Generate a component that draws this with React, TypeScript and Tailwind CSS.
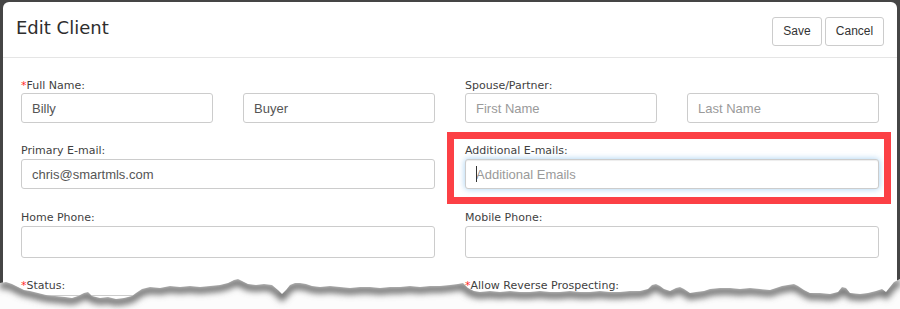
import React from 'react';

const labelCls =
  "block h-[14px] text-[11px] leading-[14px] text-[#3f3f3f] font-['DejaVu_Sans',Verdana,sans-serif] whitespace-nowrap";
const inputCls =
  "block w-full rounded-[3px] border border-[#cccccc] bg-white px-[10px] text-[13px] text-[#555] placeholder:text-[#9a9a9a] font-['Liberation_Sans',Arial,sans-serif] outline-none";

// puntos del borde rasgado (x, y global)
const tear: [number, number][] = [
  [0, 283], [6, 282], [12, 284], [18, 287], [24, 290], [30, 291], [38, 293], [46, 295], [55, 296],
  [65, 297], [72, 298], [78, 296], [84, 293], [88, 292], [92, 296], [100, 298], [108, 297], [116, 299],
  [124, 298], [132, 296], [136, 293], [142, 289], [150, 287], [160, 288], [170, 286], [180, 287],
  [190, 286], [200, 287], [210, 286], [220, 285], [228, 283], [234, 280], [238, 279], [242, 281],
  [248, 284], [256, 285], [264, 284], [272, 285], [278, 290], [282, 294], [286, 290], [290, 285],
  [295, 283], [300, 283], [306, 284], [312, 286], [320, 287], [330, 286], [340, 287], [350, 288],
  [360, 287], [370, 287], [380, 288], [390, 287], [400, 287], [410, 286], [420, 287], [430, 286],
  [440, 286], [450, 285], [458, 284], [463, 283], [468, 288], [474, 291], [480, 292], [490, 291],
  [500, 292], [510, 291], [520, 292], [530, 292], [540, 291], [550, 292], [560, 292], [570, 291],
  [580, 292], [590, 292], [600, 291], [610, 292], [620, 292], [630, 291], [640, 291], [648, 289],
  [652, 285], [656, 284], [660, 286], [664, 289], [670, 291], [676, 288], [680, 287], [684, 289],
  [690, 293], [696, 292], [704, 291], [710, 289], [720, 288], [730, 288], [740, 289], [750, 288],
  [760, 289], [770, 290], [776, 288], [782, 286], [788, 285], [794, 284], [798, 286], [804, 290],
  [810, 293], [820, 293], [830, 294], [838, 292], [842, 287], [846, 288], [850, 293], [860, 294],
  [868, 293], [876, 291], [882, 289], [886, 292], [890, 287], [894, 282], [900, 279],
];

function TornEdge() {
  const top = 270;
  const line = tear.map(([x, y]) => `${x},${y - top}`).join(' ');
  const below = `${line} 900,39 0,39`;
  return (
    <svg
      className="absolute left-0 bottom-0"
      width={900}
      height={39}
      viewBox="0 0 900 39"
    >
      <defs>
        <filter id="blur" x="-5%" y="-100%" width="110%" height="300%">
          <feGaussianBlur stdDeviation="3" />
        </filter>
        <clipPath id="below">
          <polygon points={below} />
        </clipPath>
      </defs>
      <polygon points={below} fill="#fcfcfc" />
      <g clipPath="url(#below)">
        <polyline
          points={line}
          transform="translate(0 3)"
          fill="none"
          stroke="#6a6a6a"
          strokeWidth={7}
          filter="url(#blur)"
        />
      </g>
    </svg>
  );
}

function Label({ text, required }: { text: string; required?: boolean }) {
  return (
    <label className={labelCls}>
      {required && <span className="text-[#ff2a2a]">*</span>}
      {text}
    </label>
  );
}

export default function App() {
  return (
    <div className="relative h-[309px] w-[900px] overflow-hidden bg-[#454545] pt-[2px] pl-[3px] pr-[3px]">
      {/**Modal */}
      <div className="h-full rounded-t-[6px] bg-white">
        {/**Header */}
        <div className="flex h-[56px] items-center justify-between border-b border-[#e5e5e5] pl-[13px] pr-[13px]">
          <h2 className="mt-[-3px] text-[18px] leading-[24px] text-[#2e2e2e] font-['DejaVu_Sans',Verdana,sans-serif]">
            Edit Client
          </h2>
          <div className="mt-[3px] flex gap-[3px] font-['Liberation_Sans',Arial,sans-serif]">
            <button className="h-[29px] w-[50px] rounded-[3px] border border-[#cccccc] bg-white text-[12px] text-[#333]">
              Save
            </button>
            <button className="h-[29px] w-[59px] rounded-[3px] border border-[#cccccc] bg-white text-[12px] text-[#333]">
              Cancel
            </button>
          </div>
        </div>

        {/**Body */}
        <div className="grid grid-cols-2 gap-x-[30px] px-[18px] pt-[21px]">
          {/**Fila 1 */}
          <div className="mb-[21px]">
            <Label text="Full Name:" required />
            <div className="grid grid-cols-2 gap-x-[30px]">
              <input className={`${inputCls} h-[30px]`} defaultValue="Billy" readOnly />
              <input className={`${inputCls} h-[30px]`} defaultValue="Buyer" readOnly />
            </div>
          </div>
          <div className="mb-[21px]">
            <Label text="Spouse/Partner:" />
            <div className="grid grid-cols-2 gap-x-[30px]">
              <input className={`${inputCls} h-[30px]`} placeholder="First Name" readOnly />
              <input className={`${inputCls} h-[30px]`} placeholder="Last Name" readOnly />
            </div>
          </div>

          {/**Fila 2 */}
          <div className="mb-[22px]">
            <Label text="Primary E-mail:" />
            <input className={`${inputCls} mt-[1px] h-[30px]`} defaultValue="chris@smartmls.com" readOnly />
          </div>
          <div className="relative mb-[22px]">
            <Label text="Additional E-mails:" />
            <div className="relative mt-[1px]">
              <input
                className={`${inputCls} h-[30px] border-[#66afe9] shadow-[inset_0_1px_1px_rgba(0,0,0,0.075),0_0_6px_rgba(102,175,233,0.6)]`}
                placeholder="Additional Emails"
                readOnly
              />
              <span className="absolute left-[11px] top-[7px] h-[16px] w-px bg-[#333]" />
            </div>
            {/**Recuadro rojo de anotación */}
            <div className="pointer-events-none absolute left-[-18px] right-[-12px] top-[-12px] bottom-[-15px] border-[7px] border-[#fc4045]" />
          </div>

          {/**Fila 3 */}
          <div className="mb-[21px]">
            <Label text="Home Phone:" />
            <input className={`${inputCls} mt-[1px] h-[32px]`} readOnly />
          </div>
          <div className="mb-[21px]">
            <Label text="Mobile Phone:" />
            <input className={`${inputCls} mt-[1px] h-[32px]`} readOnly />
          </div>

          {/**Fila 4 */}
          <div>
            <Label text="Status:" required />
            <div className="mt-[2px] h-[30px] rounded-[3px] border border-[#cccccc]" />
          </div>
          <div>
            <Label text="Allow Reverse Prospecting:" required />
            <div className="mt-[2px] h-[30px] rounded-[3px] border border-[#cccccc]" />
          </div>
        </div>
      </div>
      <TornEdge />
    </div>
  );
}
